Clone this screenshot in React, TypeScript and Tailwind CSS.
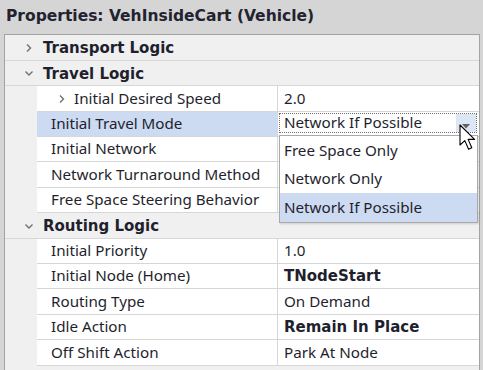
import React from 'react';

type Row =
    | { kind: 'cat'; label: string; open: boolean; h: string }
    | { kind: 'prop'; label: string; value: string; bold?: boolean; sub?: boolean; h: string; active?: boolean };

const rows: Row[] = [
    { kind: 'cat', label: 'Transport Logic', open: false, h: 'h-[26px]' },
    { kind: 'cat', label: 'Travel Logic', open: true, h: 'h-[25px]' },
    { kind: 'prop', label: 'Initial Desired Speed', value: '2.0', sub: true, h: 'h-[26px]' },
    { kind: 'prop', label: 'Initial Travel Mode', value: 'Network If Possible', active: true, h: 'h-[25px]' },
    { kind: 'prop', label: 'Initial Network', value: '', h: 'h-[25px]' },
    { kind: 'prop', label: 'Network Turnaround Method', value: '', h: 'h-[26px]' },
    { kind: 'prop', label: 'Free Space Steering Behavior', value: '', h: 'h-[25px]' },
    { kind: 'cat', label: 'Routing Logic', open: true, h: 'h-[26px]' },
    { kind: 'prop', label: 'Initial Priority', value: '1.0', h: 'h-[25px]' },
    { kind: 'prop', label: 'Initial Node (Home)', value: 'TNodeStart', bold: true, h: 'h-[25px]' },
    { kind: 'prop', label: 'Routing Type', value: 'On Demand', h: 'h-[26px]' },
    { kind: 'prop', label: 'Idle Action', value: 'Remain In Place', bold: true, h: 'h-[25px]' },
    { kind: 'prop', label: 'Off Shift Action', value: 'Park At Node', h: 'h-[26px]' },
];

const Chevron = ({ open }: { open: boolean }) => (
    <svg width="10" height="10" viewBox="0 0 10 10" className="shrink-0">
        {open ? (
            <path d="M1.5 3.5 L5 7 L8.5 3.5" fill="none" stroke="#707070" strokeWidth="1.4" />
        ) : (
            <path d="M3 1.5 L6.5 5 L3 8.5" fill="none" stroke="#707070" strokeWidth="1.4" />
        )}
    </svg>
);

// mouse pointer hovering the combo arrow
const Cursor = () => (
    <svg width="18" height="27" viewBox="0 0 18 27" className="absolute left-[181px] top-[11px] z-20">
        <path d="M1 1 L1 21 L5.8 16.6 L9.6 25.2 L12.8 23.8 L9.1 15.4 L15.6 15.4 Z" fill="#ffffff" stroke="#000000" strokeWidth="1.1" strokeLinejoin="round" />
    </svg>
);

const options = ['Free Space Only', 'Network Only', 'Network If Possible'];

function TravelModeCombo() {
    return (
        <div className="relative h-full">
            <div className="absolute left-px right-[2px] top-0 bottom-[3px] border border-dotted border-[#6e6e6e] bg-white flex items-center">
                <span className="pl-[4px] flex-1">Network If Possible</span>
                <div className="w-[20px] h-full bg-[#dce7f6] flex items-center justify-center">
                    <svg width="8" height="5" viewBox="0 0 8 5" className="mt-[6px]">
                        <path d="M0 0 L8 0 L4 4.5 Z" fill="#606060" />
                    </svg>
                </div>
            </div>
            <div className="absolute left-px right-px top-[22px] z-10 bg-white border border-[#a9a9a9] shadow-[1px_1px_2px_rgba(0,0,0,0.15)]">
                {options.map((o) => (
                    <div
                        key={o}
                        className={`h-[28.7px] flex items-center pl-[4px] ${o === 'Network If Possible' ? 'bg-[#cddbf2]' : ''}`}
                    >
                        {o}
                    </div>
                ))}
            </div>
            <Cursor />
        </div>
    );
}

export default function App() {
    return (
        <div className="w-[483px] h-[370px] bg-[#d5d5d5] overflow-hidden text-[15.2px] text-[#1f1f2e] font-['Noto_Sans',sans-serif] leading-none">
            <div className="h-[34px] flex items-center pl-[6px] font-bold text-[15.5px] font-['DejaVu_Sans',sans-serif] text-[#222230]">
                Properties: VehInsideCart (Vehicle)
            </div>
            <div className="ml-[4px] mr-[3px] h-[340px] border border-[#a3a3a3] bg-[#f0f0f0]">
                {rows.map((r) =>
                    r.kind === 'cat' ? (
                        <div key={r.label} className={`${r.h} flex items-center border-b border-[#d7d7d7] pl-[19px] gap-[9px]`}>
                            <Chevron open={r.open} />
                            <span className="font-bold text-[15px] pt-[2px] font-['DejaVu_Sans',sans-serif]">{r.label}</span>
                        </div>
                    ) : (
                        <div key={r.label} className={`${r.h} flex pl-[32px]`}>
                            <div
                                className={`w-[241px] flex items-center border-b border-r border-[#d7d7d7] ${r.active ? 'bg-[#cddbf2]' : 'bg-white'} ${r.sub ? 'pl-[20px] gap-[7px]' : 'pl-[14px]'}`}
                            >
                                {r.sub && <Chevron open={false} />}
                                <span>{r.label}</span>
                            </div>
                            <div className="flex-1 bg-white border-b border-[#d7d7d7] flex items-center">
                                {r.active ? (
                                    <div className="w-full h-full pt-px">
                                        <TravelModeCombo />
                                    </div>
                                ) : (
                                    <span className={`pl-[6px] ${r.bold ? "font-bold font-['DejaVu_Sans',sans-serif] text-[15px]" : ''}`}>{r.value}</span>
                                )}
                            </div>
                        </div>
                    )
                )}
            </div>
        </div>
    );
}
